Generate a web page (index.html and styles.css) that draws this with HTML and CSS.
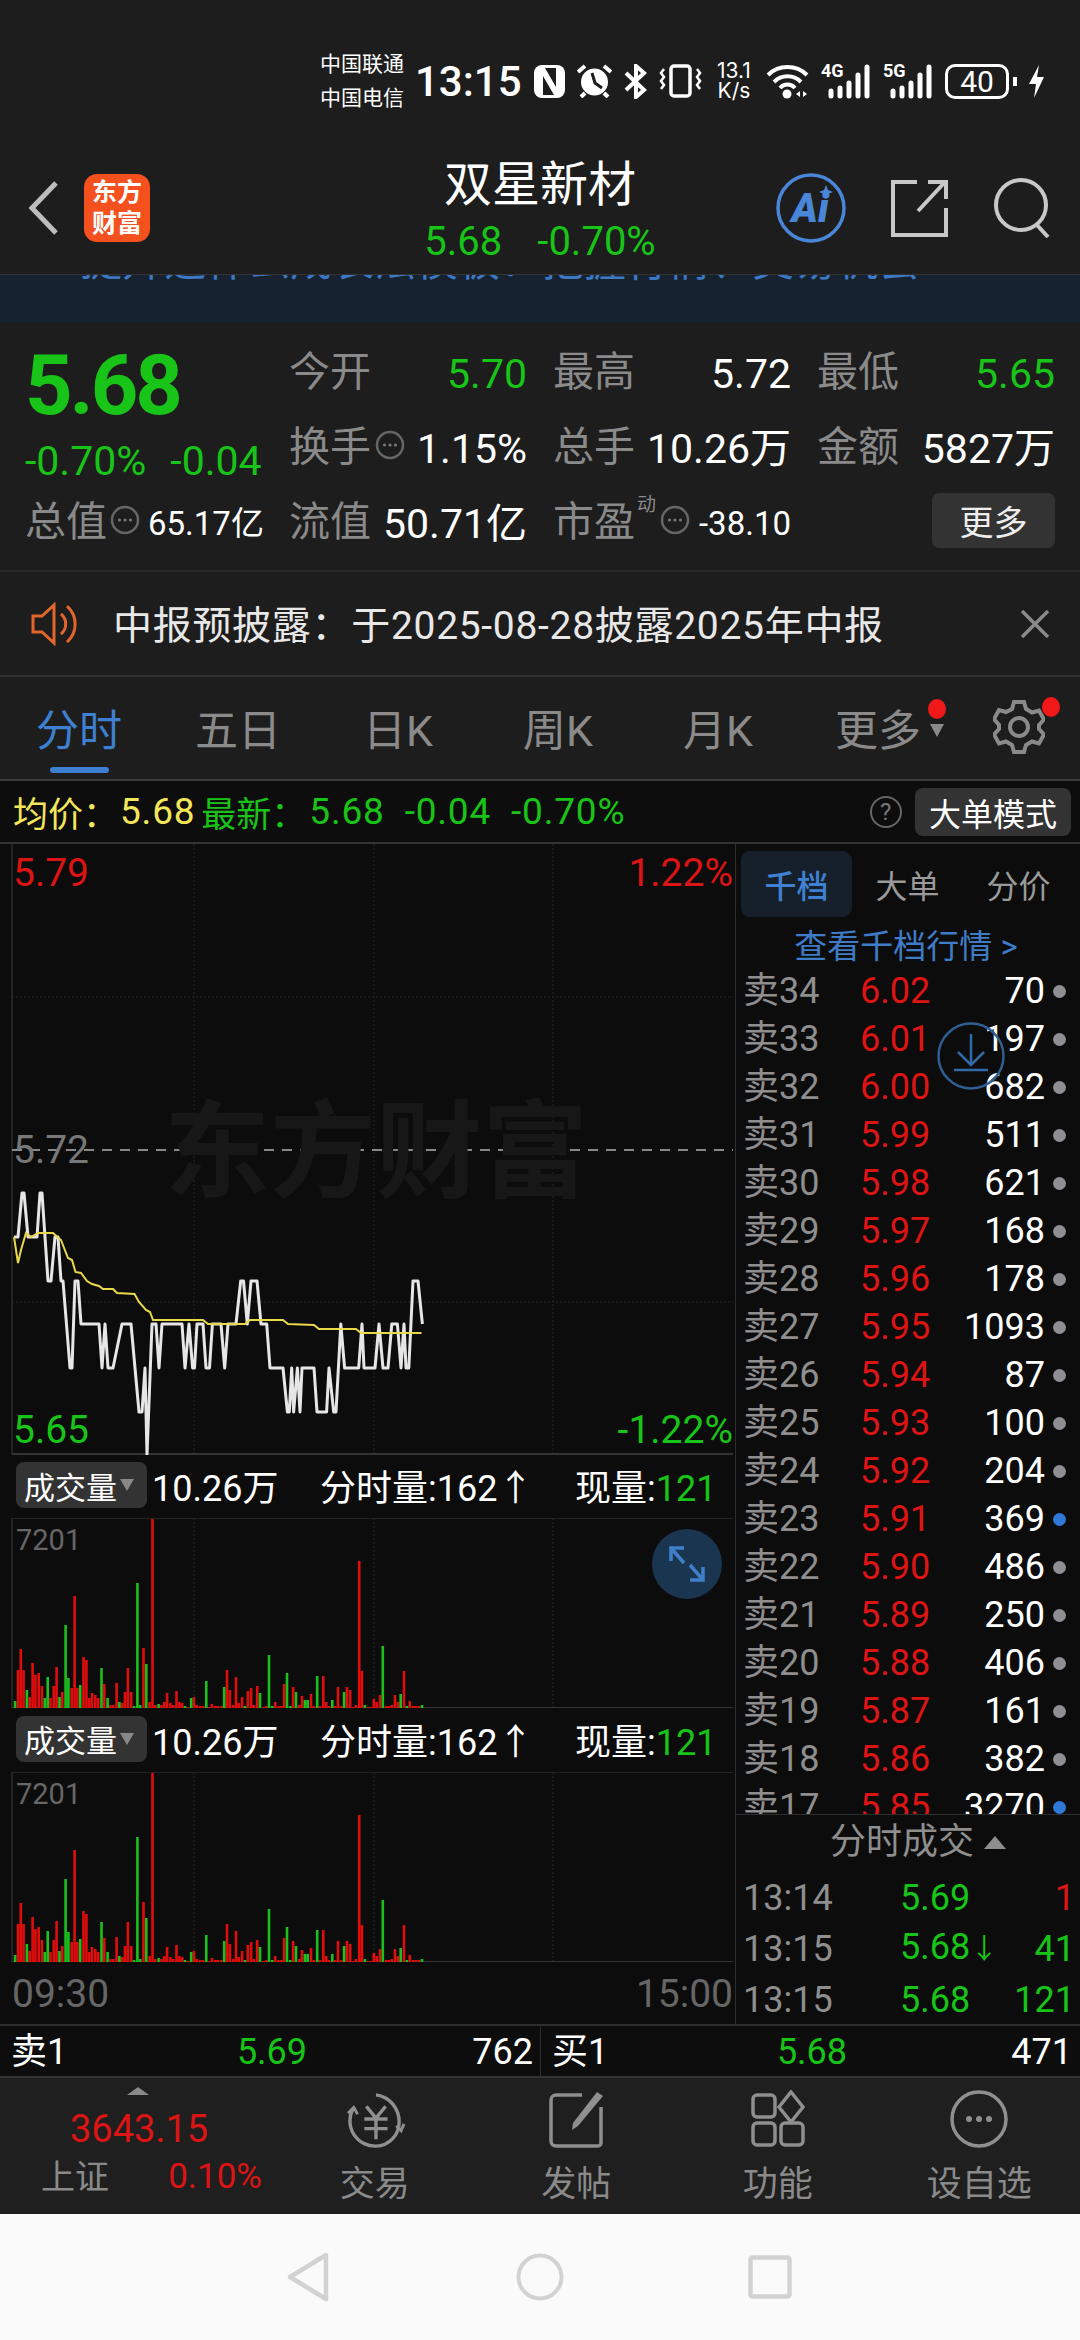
FILE: index.html
```html
<!DOCTYPE html>
<html lang="zh-CN">
<head>
  <meta charset="UTF-8" />
  <meta name="viewport" content="width=device-width, initial-scale=1.0"/>
  <title>双星新材</title>
  <link rel="stylesheet" href="styles.css">
</head>
<body>

  <svg class="sprite">
    <symbol id="dots" viewBox="0 0 30 30">
      <circle cx="15" cy="15" r="13" fill="none" stroke="#666" stroke-width="2.5"/>
      <circle cx="9.5" cy="15" r="1.6" fill="#777"/><circle cx="15" cy="15" r="1.6" fill="#777"/><circle cx="20.5" cy="15" r="1.6" fill="#777"/>
    </symbol>
    <symbol id="bars" viewBox="0 0 52 36">
      <path d="M10 33v-5M19 33V25M28 33V20M37 33V12M46 33V4" stroke="#fff" stroke-width="5" stroke-linecap="round"/>
    </symbol>
    <symbol id="volbars" viewBox="0 0 735 190">
      <g transform="translate(0 -1518)">
        <path d="M194 1518V1708M374 1518V1708M553 1518V1708" stroke="#2a2a2a" stroke-width="1" stroke-dasharray="2 2" fill="none"/>
        <path d="M12 1518V1708M12 1518H733" stroke="#2b2b2b" stroke-width="1.5" fill="none"/>
        <path d="M12 1708H733" stroke="#333" stroke-width="2" fill="none"/>
        <path fill="none" stroke="#e00d0d" stroke-width="2.6" d="M18 1708V1670M20.8 1708V1649M23.6 1708V1670M29.7 1708V1697M32.6 1708V1663M35.4 1708V1675M38.7 1708V1673M42 1708V1686M50.5 1708V1698M53.8 1708V1686M56.6 1708V1667M62.3 1708V1692M71.7 1708V1688M74.6 1708V1596M77.4 1708V1688M83.5 1708V1657M86.4 1708V1660M89.2 1708V1698M92 1708V1693M95.3 1708V1695M98.2 1708V1698M104.3 1708V1684M110.4 1708V1705M113.3 1708V1705M116.6 1708V1683M122.2 1708V1703M125 1708V1692M127.9 1708V1668M131.2 1708V1692M143.5 1708V1648M149.6 1708V1702M152.5 1708V1519M155.3 1708V1705M161.4 1708V1705M164.3 1708V1702M167.1 1708V1693M170.4 1708V1703M173.2 1708V1705M176.5 1708V1691M179.4 1708V1702M182.2 1708V1703M187.9 1708V1707M194 1708V1697M196.8 1708V1705M200.1 1708V1706M203 1708V1706M209.1 1708V1707M212 1708V1704M215.2 1708V1706M218 1708V1706M221.4 1708V1706M227 1708V1670M229.9 1708V1690M233.2 1708V1705M236 1708V1677M238.8 1708V1703M242.1 1708V1697M247.8 1708V1691M251.1 1708V1688M253.9 1708V1705M257.2 1708V1686M263.4 1708V1707M266.2 1708V1706M275.2 1708V1702M278.5 1708V1706M281.3 1708V1706M284.1 1708V1684M293.1 1708V1687M299.2 1708V1705M302 1708V1696M311 1708V1694M313.9 1708V1706M320 1708V1706M323.3 1708V1676M326.2 1708V1702M329 1708V1706M335.1 1708V1706M338 1708V1687M341.3 1708V1706M346.9 1708V1687M350.2 1708V1690M353 1708V1707M355.9 1708V1705M359.2 1708V1561M362 1708V1671M368.2 1708V1707M371 1708V1707M373.8 1708V1699M376.7 1708V1702M380 1708V1695M386 1708V1706M388.9 1708V1706M391.8 1708V1705M395 1708V1695M398 1708V1702M404 1708V1671M409.7 1708V1701M413 1708V1706M415.8 1708V1706M419 1708V1706"/>
        <path fill="none" stroke="#1cc01c" stroke-width="2.6" d="M15.1 1708V1701M26.9 1708V1690M44.8 1708V1698M47.7 1708V1677M59.5 1708V1697M65.6 1708V1625M68.4 1708V1678M80.2 1708V1685M101.5 1708V1668M107.6 1708V1698M119.4 1708V1702M134 1708V1706M137.4 1708V1583M140.2 1708V1705M146.3 1708V1664M158.6 1708V1704M185 1708V1706M191.2 1708V1698M206.3 1708V1681M224.2 1708V1687M245 1708V1706M260 1708V1693M269 1708V1655M272.3 1708V1706M287 1708V1673M290.3 1708V1706M296 1708V1692M304.9 1708V1700M307.7 1708V1700M317.2 1708V1676M332.3 1708V1700M344.1 1708V1692M364.9 1708V1705M382.8 1708V1646M400.7 1708V1694M406.9 1708V1706M422 1708V1705"/>
      </g>
    </symbol>
  </svg>

  <div class="status">
    <div class="carrier"><span>中国联通</span><span>中国电信</span></div>
    <div class="clock">13:15</div>
    <svg width="31" height="33" viewBox="0 0 31 33"><rect width="31" height="33" rx="8" fill="#fff"/><path d="M9 11l11 19H9zM22 22L11 3h11z" fill="#1d1d1d"/></svg>
    <svg width="35" height="34" viewBox="0 0 35 34"><circle cx="17.500" cy="18" r="13.500" fill="#fff"/><path d="M15 9l3 10 7 5" stroke="#1d1d1d" stroke-width="3" fill="none"/><path d="M1 8l7-6M34 8l-7-6M8 29l-4 4M27 29l4 4" stroke="#fff" stroke-width="4"/></svg>
    <svg width="23" height="35" viewBox="0 0 23 35"><path d="M2 9l18 17-8 7V2l8 7L2 26" stroke="#fff" stroke-width="4" fill="none"/></svg>
    <svg width="43" height="34" viewBox="0 0 43 34"><rect x="12" y="2" width="19" height="30" rx="3" fill="none" stroke="#fff" stroke-width="3.500"/><path d="M5 5l-3 4 3 4-3 4 3 4-3 4M38 5l3 4-3 4 3 4-3 4 3 4" stroke="#fff" stroke-width="2.500" fill="none"/></svg>
    <div class="speed"><span>13.1</span><span>K/s</span></div>
    <svg width="43" height="36" viewBox="0 0 43 36"><path d="M2 12a28 28 0 0 1 39 0M8 19a19 19 0 0 1 27 0M14 25a10 10 0 0 1 15 0" stroke="#fff" stroke-width="4" fill="none"/><circle cx="21" cy="31" r="4.500" fill="#fff"/><path d="M34 28v6l-4-3zM37 28v6l4-3z" fill="#fff"/></svg>
    <div class="signal"><span>4G</span><svg width="52" height="36"><use href="#bars"/></svg></div>
    <div class="signal"><span>5G</span><svg width="52" height="36"><use href="#bars"/></svg></div>
    <div class="battery"><span>40</span></div>
    <svg class="bolt" width="15" height="33" viewBox="0 0 15 33"><path d="M10 0L0 19h7L5 33l10-21H8z" fill="#fff"/></svg>
  </div>

  <header class="appbar">
    <div class="appbar-left">
      <svg width="30" height="54" viewBox="0 0 30 54"><path d="M28 2L4 27l24 25" stroke="#bdbdbd" stroke-width="5" fill="none"/></svg>
      <div class="logo"><span>东方</span><span>财富</span></div>
    </div>
    <div class="appbar-title">
      <div class="stock-name">双星新材</div>
      <div class="stock-sub"><span>5.68</span><span>-0.70%</span></div>
    </div>
    <div class="appbar-right">
      <svg width="72" height="72" viewBox="0 0 72 72"><circle cx="36" cy="36" r="33" fill="none" stroke="#4a86d8" stroke-width="3.500"/><text x="35" y="50" class="ai">Ai</text><path d="M51 13l2 5 5 2-5 2-2 5-2-5-5-2 5-2z" fill="#4a86d8"/></svg>
      <svg width="58" height="58" viewBox="0 0 58 58"><path d="M26 3H2v53h53V29" stroke="#c8c8c8" stroke-width="4" fill="none"/><path d="M27 32L54 3M37 3h18v17" stroke="#c8c8c8" stroke-width="4" fill="none"/></svg>
      <svg width="58" height="60" viewBox="0 0 58 60"><circle cx="28" cy="27" r="25" fill="none" stroke="#c8c8c8" stroke-width="4"/><path d="M44 47l11 12" stroke="#c8c8c8" stroke-width="4"/></svg>
    </div>
  </header>

  <div class="banner">
    <div class="banner-text"><span>提升选什么成长法模板：把握行情、交易机会</span><span class="banner-more">&gt;&gt;</span></div>
  </div>

  <section class="quote">
    <div class="quote-main">
      <div class="price-big">5.68</div>
      <div class="price-change"><span>-0.70%</span><span>-0.04</span></div>
      <div class="cell cell-left">
        <span class="lab">总值</span><svg class="dots"><use href="#dots"/></svg><span class="val small">65.17亿</span>
      </div>
    </div>
    <div class="quote-grid">
      <div class="cell"><span class="lab">今开</span><span class="val green">5.70</span></div>
      <div class="cell"><span class="lab">最高</span><span class="val">5.72</span></div>
      <div class="cell"><span class="lab">最低</span><span class="val green">5.65</span></div>
      <div class="cell"><span class="lab">换手</span><svg class="dots"><use href="#dots"/></svg><span class="val">1.15%</span></div>
      <div class="cell"><span class="lab">总手</span><span class="val">10.26万</span></div>
      <div class="cell"><span class="lab">金额</span><span class="val">5827万</span></div>
      <div class="cell"><span class="lab">流值</span><span class="val">50.71亿</span></div>
      <div class="cell"><span class="lab">市盈<sup>动</sup></span><svg class="dots dots-sup"><use href="#dots"/></svg><span class="val small">-38.10</span></div>
      <div class="cell cell-end"><span class="more-btn">更多</span></div>
    </div>
  </section>

  <section class="notice">
    <svg width="50" height="44" viewBox="0 0 50 44"><path d="M3 14h9L24 3v38L12 30H3z" fill="none" stroke="#e2662a" stroke-width="3"/><path d="M31 12a13 13 0 0 1 0 20M37 4a24 24 0 0 1 0 36" fill="none" stroke="#e2662a" stroke-width="3"/></svg>
    <div class="notice-text">中报预披露：于2025-08-28披露2025年中报</div>
    <svg class="notice-close" width="30" height="30" viewBox="0 0 30 30"><path d="M2 2l26 26M28 2L2 28" stroke="#8a8a8a" stroke-width="3.500"/></svg>
  </section>

  <nav class="tabs">
    <div class="tab active">分时</div>
    <div class="tab">五日</div>
    <div class="tab">日K</div>
    <div class="tab">周K</div>
    <div class="tab">月K</div>
    <div class="tab tab-more">更多<i class="caret"></i><i class="red-dot"></i></div>
    <div class="tab tab-gear">
      <svg width="52" height="56" viewBox="0 0 52 56"><path d="M21 3h10l2 7 6 3.500 7-2 5 9-5 5.500v4l5 5.500-5 9-7-2-6 3.500-2 7H21l-2-7-6-3.500-7 2-5-9 5-5.500v-4L1 20l5-9 7 2 6-3z" fill="none" stroke="#8a8a8a" stroke-width="4"/><circle cx="26" cy="28" r="9" fill="none" stroke="#8a8a8a" stroke-width="4"/></svg>
      <i class="red-dot"></i>
    </div>
  </nav>

  <div class="infoline">
    <span class="yellow lab-info">均价：</span><span class="yellow">5.68</span>
    <span class="green lab-new">最新：</span><span class="green v1">5.68</span><span class="green v2">-0.04</span><span class="green v2">-0.70%</span>
    <span class="help">?</span>
    <span class="mode-btn">大单模式</span>
  </div>

  <div class="board">
    <div class="charts">
      <div class="price-chart">
        <svg width="735" height="611" viewBox="0 844 735 611">
          <path d="M194 844V1455M374 844V1455M553 844V1455" stroke="#262626" stroke-width="1" stroke-dasharray="2 2" fill="none"/>
          <path d="M12 997H733M12 1302H733" stroke="#262626" stroke-width="1" stroke-dasharray="2 2" fill="none"/>
          <path d="M12 844V1455" stroke="#2b2b2b" stroke-width="1.500" fill="none"/>
          <path d="M12 1454H733" stroke="#333" stroke-width="2" fill="none"/>
          <path d="M12 1150H733" stroke="#8a8a8a" stroke-width="2" stroke-dasharray="10 8" fill="none"/>
          <polyline fill="none" stroke="#e6e6e6" stroke-width="3" stroke-linejoin="round" points="14,1237 18,1237 22,1193 24,1193 28,1237 37,1237 40,1193 42,1193 48,1281 51,1281 55,1237 58,1237 61,1281 63,1281 70,1368 72,1368 75,1281 78,1281 81,1324 99,1324 102,1368 105,1324 108,1368 113,1368 122,1324 131,1324 139,1412 142,1412 145,1368 147,1455 152,1324 156,1324 159,1368 162,1324 182,1324 185,1368 189,1324 192.600,1368 194.500,1368 197,1324 203,1324 206,1368 209.500,1368 212.400,1324 221,1324 224.700,1368 228,1324 236,1324 240.700,1281 243.500,1281 247.300,1324 251,1281 257,1281 261,1324 266.700,1324 270,1368 283,1368 287.400,1412 289.300,1412 291.700,1368 293.600,1412 297.400,1368 300,1412 302,1368 307.700,1368 310.600,1368 314,1368 317,1412 326.600,1412 329,1368 333.700,1412 336,1412 340.800,1324 344.600,1368 358.700,1368 362,1324 364,1368 375,1368 379,1324 383,1368 388,1368 391.800,1324 397.400,1324 401,1368 404,1324 406,1368 408.800,1368 413,1281 418,1281 422.400,1324"/>
          <polyline fill="none" stroke="#e8d84a" stroke-width="2" points="14,1237 18,1263 21,1250 26,1233 31,1237 38,1233 53,1233 61,1240 68,1258 72,1260 75.500,1272 81,1273 87,1281 92,1284 99,1286 103,1289 113,1289 117,1293 134.500,1294 139,1302 146,1310 150,1312 153,1320 203,1320 208,1324 245,1324 250,1320 283,1320 288,1324 314,1325 319,1329 356,1329 361,1333 421.500,1333"/>
        </svg>
        <div class="watermark">东方财富</div>
        <span class="axis-lab top-left red">5.79</span>
        <span class="axis-lab top-right red">1.22%</span>
        <span class="axis-lab mid-left">5.72</span>
        <span class="axis-lab bot-left green">5.65</span>
        <span class="axis-lab bot-right green">-1.22%</span>
      </div>

      <div class="vol-head">
        <span class="vol-btn">成交量<i class="caret-sm"></i></span>
        <span>10.26万</span>
        <span>分时量:162↑</span>
        <span>现量:<b class="green">121</b></span>
      </div>
      <div class="vol-chart">
        <svg width="735" height="190"><use href="#volbars"/></svg>
        <span class="vol-max">7201</span>
        <div class="expand">
          <svg width="38" height="38" viewBox="0 0 38 38"><path d="M3 16V3h13M3 3l13 15M35 22v13H22M35 35L22 20" stroke="#3f7fc9" stroke-width="3.500" fill="none"/></svg>
        </div>
      </div>

      <div class="vol-head vol-head-2">
        <span class="vol-btn">成交量<i class="caret-sm"></i></span>
        <span>10.26万</span>
        <span>分时量:162↑</span>
        <span>现量:<b class="green">121</b></span>
      </div>
      <div class="vol-chart vol-chart-2">
        <svg width="735" height="190"><use href="#volbars"/></svg>
        <span class="vol-max">7201</span>
      </div>

      <div class="time-axis"><span>09:30</span><span>15:00</span></div>
    </div>

    <aside class="depth">
      <div class="depth-tabs">
        <div class="depth-tab active">千档</div>
        <div class="depth-tab">大单</div>
        <div class="depth-tab">分价</div>
      </div>
      <div class="depth-link">查看千档行情 &gt;</div>
      <div class="depth-rows">
        <div class="row"><span class="r-lab">卖34</span><span class="red">6.02</span><span class="r-qty">70</span><i class="r-dot"></i></div>
        <div class="row"><span class="r-lab">卖33</span><span class="red">6.01</span><span class="r-qty">197</span><i class="r-dot"></i></div>
        <div class="row"><span class="r-lab">卖32</span><span class="red">6.00</span><span class="r-qty">682</span><i class="r-dot"></i></div>
        <div class="row"><span class="r-lab">卖31</span><span class="red">5.99</span><span class="r-qty">511</span><i class="r-dot"></i></div>
        <div class="row"><span class="r-lab">卖30</span><span class="red">5.98</span><span class="r-qty">621</span><i class="r-dot"></i></div>
        <div class="row"><span class="r-lab">卖29</span><span class="red">5.97</span><span class="r-qty">168</span><i class="r-dot"></i></div>
        <div class="row"><span class="r-lab">卖28</span><span class="red">5.96</span><span class="r-qty">178</span><i class="r-dot"></i></div>
        <div class="row"><span class="r-lab">卖27</span><span class="red">5.95</span><span class="r-qty">1093</span><i class="r-dot"></i></div>
        <div class="row"><span class="r-lab">卖26</span><span class="red">5.94</span><span class="r-qty">87</span><i class="r-dot"></i></div>
        <div class="row"><span class="r-lab">卖25</span><span class="red">5.93</span><span class="r-qty">100</span><i class="r-dot"></i></div>
        <div class="row"><span class="r-lab">卖24</span><span class="red">5.92</span><span class="r-qty">204</span><i class="r-dot"></i></div>
        <div class="row"><span class="r-lab">卖23</span><span class="red">5.91</span><span class="r-qty">369</span><i class="r-dot blue"></i></div>
        <div class="row"><span class="r-lab">卖22</span><span class="red">5.90</span><span class="r-qty">486</span><i class="r-dot"></i></div>
        <div class="row"><span class="r-lab">卖21</span><span class="red">5.89</span><span class="r-qty">250</span><i class="r-dot"></i></div>
        <div class="row"><span class="r-lab">卖20</span><span class="red">5.88</span><span class="r-qty">406</span><i class="r-dot"></i></div>
        <div class="row"><span class="r-lab">卖19</span><span class="red">5.87</span><span class="r-qty">161</span><i class="r-dot"></i></div>
        <div class="row"><span class="r-lab">卖18</span><span class="red">5.86</span><span class="r-qty">382</span><i class="r-dot"></i></div>
        <div class="row"><span class="r-lab">卖17</span><span class="red">5.85</span><span class="r-qty">3270</span><i class="r-dot blue"></i></div>
      </div>
      <div class="download">
        <svg width="68" height="68" viewBox="0 0 68 68"><circle cx="34" cy="34" r="32.500" fill="none" stroke="#2f5f90" stroke-width="2.500"/><path d="M34 12v30M21 30l13 13 13-13M17 48h34" fill="none" stroke="#2f6aa6" stroke-width="2.500"/></svg>
      </div>
      <div class="trades-head">分时成交<i class="caret-up"></i></div>
      <div class="trade"><span class="r-lab">13:14</span><span class="green">5.69</span><span class="t-qty red">1</span></div>
      <div class="trade"><span class="r-lab">13:15</span><span class="green">5.68<small>↓</small></span><span class="t-qty green">41</span></div>
      <div class="trade"><span class="r-lab">13:15</span><span class="green">5.68</span><span class="t-qty green">121</span></div>
    </aside>
  </div>

  <div class="level-one">
    <div class="level-cell"><span>卖1</span><span class="green">5.69</span><span class="level-qty">762</span></div>
    <div class="level-cell"><span>买1</span><span class="green">5.68</span><span class="level-qty">471</span></div>
  </div>

  <footer class="bottom-nav">
    <div class="market">
      <i class="market-tri"></i>
      <div class="market-price">3643.15</div>
      <div class="market-row"><span class="market-name">上证</span><span class="red">0.10%</span></div>
    </div>
    <div class="nav-item">
      <svg width="62" height="60" viewBox="0 0 62 60"><path d="M8 20a26 26 0 0 0 24 38c14 0 24-12 24-25 0-13-9-26-24-28" fill="none" stroke="#8f8f8f" stroke-width="3.500"/><path d="M3 24l6-6 4 7M53 37l5 5 3-7" fill="none" stroke="#8f8f8f" stroke-width="3"/><path d="M22 17l10 12 10-12M20 30h24M20 40h24M32 29v22" fill="none" stroke="#8f8f8f" stroke-width="3.500"/></svg>
      <span>交易</span>
    </div>
    <div class="nav-item">
      <svg width="56" height="56" viewBox="0 0 56 56"><path d="M34 4H8a5 5 0 0 0-5 5v41a5 5 0 0 0 5 5h42a3 3 0 0 0 3-3V16" fill="none" stroke="#8f8f8f" stroke-width="3.500"/><path d="M49 1l6 4-25 30-6 4 1-7z" fill="#8f8f8f"/></svg>
      <span>发帖</span>
    </div>
    <div class="nav-item">
      <svg width="54" height="56" viewBox="0 0 54 56"><rect x="2" y="4" width="22" height="22" rx="4" fill="none" stroke="#8f8f8f" stroke-width="3.500"/><path d="M40 1l12 15-12 15-12-15z" fill="none" stroke="#8f8f8f" stroke-width="3.500"/><rect x="2" y="32" width="22" height="22" rx="4" fill="none" stroke="#8f8f8f" stroke-width="3.500"/><rect x="30" y="32" width="22" height="22" rx="4" fill="none" stroke="#8f8f8f" stroke-width="3.500"/></svg>
      <span>功能</span>
    </div>
    <div class="nav-item">
      <svg width="58" height="58" viewBox="0 0 58 58"><circle cx="29" cy="29" r="27" fill="none" stroke="#8f8f8f" stroke-width="3.500"/><circle cx="19" cy="29" r="3" fill="#8f8f8f"/><circle cx="29" cy="29" r="3" fill="#8f8f8f"/><circle cx="39" cy="29" r="3" fill="#8f8f8f"/></svg>
      <span>设自选</span>
    </div>
  </footer>

  <div class="system-nav">
    <svg width="44" height="50" viewBox="0 0 44 50"><path d="M40 3v44L4 25z" fill="none" stroke="#d2d2d2" stroke-width="4.500" stroke-linejoin="round"/></svg>
    <svg width="48" height="48" viewBox="0 0 48 48"><circle cx="24" cy="24" r="21.500" fill="none" stroke="#d2d2d2" stroke-width="4"/></svg>
    <svg width="44" height="44" viewBox="0 0 44 44"><rect x="2.500" y="2.500" width="39" height="39" rx="2" fill="none" stroke="#d2d2d2" stroke-width="4.500"/></svg>
  </div>

</body>
</html>
```

FILE: styles.css
```css
* {
  box-sizing: border-box;
}

body {
  margin: 0;
  width: 1080px;
  height: 2340px;
  overflow: hidden;
  background-color: #1d1d1d;
  color: #fff;
  font-family: Roboto, "Noto Sans CJK SC", sans-serif;
}

i {
  font-style: normal;
}

.sprite {
  display: none;
}

.green {
  color: #18c418;
}

.red {
  color: #dc1414;
}

.yellow {
  color: #f4e65a;
}

/* status bar */
.status {
  height: 160px;
  display: flex;
  align-items: center;
  gap: 12px;
  padding: 2px 0 0 320px;
}

.carrier {
  display: flex;
  flex-direction: column;
  font-size: 21px;
  line-height: 34px;
  width: 86px;
  margin-right: -3px;
}

.clock {
  font-size: 42px;
  font-weight: 500;
  width: 105px;
  margin-right: 2px;
}

.speed {
  width: 40px;
  display: flex;
  flex-direction: column;
  align-items: center;
  font-size: 21px;
  line-height: 20px;
  font-family: Inter, sans-serif;
}

.signal {
  position: relative;
  width: 50px;
  height: 36px;
}

.signal span {
  position: absolute;
  left: 0;
  top: -2px;
  font-size: 18px;
  line-height: 20px;
  font-weight: 700;
}

.signal svg {
  display: block;
}

.battery {
  width: 64px;
  height: 35px;
  border: 3px solid #fff;
  border-radius: 10px;
  display: flex;
  align-items: center;
  justify-content: center;
  font-size: 30px;
  position: relative;
  margin-right: 4px;
}

.battery::after {
  content: "";
  position: absolute;
  right: -11px;
  top: 10px;
  width: 4px;
  height: 9px;
  background: #fff;
}

.bolt {
  margin-left: 4px;
}

/* app bar */
.appbar {
  height: 115px;
  display: grid;
  grid-template-columns: 1fr auto 1fr;
  border-bottom: 1px solid #333;
  position: relative;
  z-index: 1;
  background: #1d1d1d;
}

.appbar-left {
  display: flex;
  align-items: center;
  gap: 26px;
  padding: 0 0 18px 28px;
}

.logo {
  width: 66px;
  height: 68px;
  background: #f4511e;
  border-radius: 13px;
  display: flex;
  flex-direction: column;
  align-items: center;
  justify-content: center;
  font-size: 25px;
  line-height: 31px;
  font-weight: 700;
}

.appbar-title {
  text-align: center;
}

.stock-name {
  font-size: 48px;
  line-height: 50px;
}

.stock-sub {
  display: flex;
  justify-content: center;
  gap: 35px;
  margin-top: 10px;
  font-size: 40px;
  line-height: 44px;
  color: #18c418;
}

.appbar-right {
  display: flex;
  align-items: center;
  justify-content: flex-end;
  gap: 44px;
  padding: 0 29px 18px 0;
}

.ai {
  font-size: 40px;
  font-weight: 900;
  font-style: italic;
  fill: #4a86d8;
  text-anchor: middle;
}

/* clipped promo strip under the app bar */
.banner {
  height: 48px;
  background: #16222f;
  overflow: hidden;
}

.banner-text {
  margin-top: -35px;
  padding: 0 45px 0 80px;
  display: flex;
  justify-content: space-between;
  font-size: 42px;
  line-height: 44px;
  color: #3d78c2;
}

.banner-more {
  font-size: 36px;
}

/* quote block */
.quote {
  height: 249px;
  display: flex;
  padding-top: 13px;
  border-bottom: 2px solid #2a2a2a;
}

.quote-main {
  width: 289px;
  padding-left: 25px;
  display: grid;
  grid-template-rows: 100px 50px 75px;
}

.price-big {
  font-size: 83px;
  line-height: 100px;
  font-weight: 700;
  letter-spacing: -3px;
  color: #18c418;
}

.price-change {
  display: flex;
  gap: 24px;
  font-size: 41px;
  line-height: 50px;
  color: #18c418;
  white-space: nowrap;
}

.quote-grid {
  display: grid;
  grid-template-columns: repeat(3, 238px);
  grid-auto-rows: 75px;
  column-gap: 26px;
}

.cell {
  display: flex;
  align-items: center;
  justify-content: space-between;
}

.cell-left {
  width: 238px;
  justify-content: flex-start;
}

.cell-end {
  justify-content: flex-end;
}

.lab {
  font-size: 41px;
  line-height: 50px;
  color: #8a8a8a;
  position: relative;
  top: -2px;
  white-space: nowrap;
}

.lab sup {
  position: absolute;
  left: 84px;
  top: -4px;
  font-size: 19px;
  line-height: 24px;
}

.val {
  font-size: 41px;
  line-height: 50px;
  white-space: nowrap;
}

.val.green {
  color: #18c418;
}

.val.small {
  font-size: 33px;
}

.dots {
  width: 30px;
  height: 30px;
  flex: none;
  margin: -8px 8px 0 0;
}

.dots-sup {
  margin: -8px 4px 0 20px;
}

.cell-left .dots {
  margin: -8px 8px 0 3px;
}

.more-btn {
  width: 123px;
  height: 55px;
  background: #333;
  border-radius: 7px;
  display: flex;
  align-items: center;
  justify-content: center;
  font-size: 34px;
  color: #eee;
  margin-top: -7px;
}

/* notice */
.notice {
  height: 105px;
  display: flex;
  align-items: center;
  padding: 0 30px;
  border-bottom: 2px solid #333;
}

.notice-text {
  margin-left: 33px;
  font-size: 39px;
  letter-spacing: 0.7px;
  color: #e8e8e8;
  white-space: nowrap;
  position: relative;
  top: -2px;
}

.notice-close {
  margin-left: auto;
}

/* chart tabs */
.tabs {
  height: 104px;
  display: grid;
  grid-template-columns: 158px repeat(5, 160px) 122px;
  border-bottom: 2px solid #3a3a3a;
}

.tab {
  position: relative;
  display: flex;
  align-items: center;
  justify-content: center;
  font-size: 43px;
  color: #8a8a8a;
  padding-bottom: 2px;
}

.tab.active {
  color: #3d7fd0;
}

.tab.active::after {
  content: "";
  position: absolute;
  left: 50px;
  bottom: 6px;
  width: 59px;
  height: 6px;
  border-radius: 3px;
  background: #3d7fd0;
}

.caret {
  position: absolute;
  left: 132px;
  top: 47px;
  width: 0;
  height: 0;
  border-left: 7px solid transparent;
  border-right: 7px solid transparent;
  border-top: 13px solid #8a8a8a;
}

.red-dot {
  position: absolute;
  left: 130px;
  top: 22px;
  width: 18px;
  height: 20px;
  border-radius: 50%;
  background: #f01818;
}

.tab-gear .red-dot {
  left: 84px;
  top: 20px;
}

/* info line above the chart */
.infoline {
  height: 63px;
  display: flex;
  align-items: center;
  padding-left: 13px;
  background: #0d0d0d;
  border-bottom: 2px solid #333;
  font-size: 37px;
  letter-spacing: 0.8px;
  white-space: nowrap;
}

.lab-info,
.lab-new {
  width: 108px;
  font-size: 35px;
  letter-spacing: 0;
}

.lab-info {
  width: 107px;
}

.lab-new {
  margin-left: 6px;
}

.v2 {
  margin-left: 20px;
}

.help {
  margin-left: auto;
  width: 32px;
  height: 32px;
  border: 2px solid #666;
  border-radius: 50%;
  display: flex;
  align-items: center;
  justify-content: center;
  font-size: 24px;
  color: #777;
}

.mode-btn {
  width: 156px;
  height: 48px;
  margin: 0 9px 0 13px;
  background: #333;
  border-radius: 8px;
  display: flex;
  align-items: center;
  justify-content: center;
  font-size: 32px;
  letter-spacing: 0;
}

/* left charts */
.board {
  height: 1180px;
  display: grid;
  grid-template-columns: 735px 345px;
  background: #0c0c0c;
}

.charts svg {
  display: block;
}

.price-chart {
  position: relative;
  height: 611px;
}

.watermark {
  position: absolute;
  left: 164px;
  top: 249px;
  font-size: 106px;
  line-height: 120px;
  font-weight: 700;
  color: #171717;
  white-space: nowrap;
}

.axis-lab {
  position: absolute;
  font-size: 39px;
  line-height: 44px;
  color: #777;
}

.axis-lab.red {
  color: #dc1414;
}

.axis-lab.green {
  color: #18c418;
}

.top-left {
  left: 13px;
  top: 7px;
}

.top-right {
  right: 2px;
  top: 7px;
}

.mid-left {
  left: 13px;
  top: 284px;
}

.bot-left {
  left: 13px;
  top: 564px;
}

.bot-right {
  right: 2px;
  top: 564px;
}

.vol-head {
  height: 63px;
  display: grid;
  grid-template-columns: 136px 168px 255px 1fr;
  align-items: center;
  padding: 0 0 3px 16px;
  font-size: 36px;
  white-space: nowrap;
}

.vol-head-2 {
  height: 64px;
}

.vol-head b {
  font-weight: 400;
}

.vol-btn {
  width: 131px;
  height: 46px;
  background: #333;
  border-radius: 8px;
  display: flex;
  align-items: center;
  padding-left: 8px;
  font-size: 31px;
  gap: 3px;
}

.caret-sm {
  width: 0;
  height: 0;
  border-left: 7px solid transparent;
  border-right: 7px solid transparent;
  border-top: 12px solid #888;
}

.vol-chart {
  position: relative;
  height: 190px;
}

.vol-chart-2 {
  height: 191px;
}

.vol-max {
  position: absolute;
  left: 16px;
  top: 4px;
  font-size: 29px;
  line-height: 36px;
  color: #666;
}

.expand {
  position: absolute;
  left: 652px;
  top: 11px;
  width: 70px;
  height: 70px;
  border-radius: 50%;
  background: #1a3550;
  display: flex;
  align-items: center;
  justify-content: center;
}

.time-axis {
  height: 61px;
  display: flex;
  justify-content: space-between;
  align-items: center;
  padding: 0 2px 0 12px;
  font-size: 39px;
  color: #666;
}

/* right depth panel */
.depth {
  position: relative;
  display: flex;
  flex-direction: column;
  border-left: 1px solid #2e2e2e;
}

.depth-tabs {
  display: grid;
  grid-template-columns: repeat(3, 111px);
  padding: 7px 0 0 5px;
}

.depth-tab {
  height: 66px;
  border-radius: 9px;
  display: flex;
  align-items: center;
  justify-content: center;
  font-size: 32px;
  color: #9a9a9a;
}

.depth-tab.active {
  background: #16202b;
  color: #3f80d2;
  font-weight: 500;
}

.depth-link {
  height: 49px;
  padding-top: 10px;
  text-align: center;
  font-size: 33px;
  line-height: 39px;
  color: #3e7cc8;
  margin-right: 4px;
}

.depth-rows {
  height: 848px;
  padding-top: 1px;
  overflow: hidden;
}

.row {
  height: 48px;
  display: grid;
  grid-template-columns: 117px 90px 95px 13px;
  align-items: baseline;
  padding-left: 7px;
  font-size: 36px;
  line-height: 48px;
}

.r-lab {
  color: #8e8e8e;
}

.r-qty {
  text-align: right;
}

.r-dot {
  align-self: center;
  width: 13px;
  height: 13px;
  margin-left: 8px;
  border-radius: 50%;
  background: #8f8f93;
}

.r-dot.blue {
  background: #2f78d6;
}

.download {
  position: absolute;
  left: 201px;
  top: 178px;
}

.trades-head {
  height: 58px;
  flex: none;
  border-top: 1px solid #2e2e2e;
  display: flex;
  align-items: center;
  justify-content: center;
  gap: 10px;
  font-size: 36px;
  line-height: 44px;
  color: #8e8e8e;
  padding: 0 0 3px 20px;
}

.caret-up {
  width: 0;
  height: 0;
  border-left: 11px solid transparent;
  border-right: 11px solid transparent;
  border-bottom: 13px solid #8e8e8e;
}

.trade {
  height: 51px;
  display: grid;
  grid-template-columns: 157px 1fr auto;
  align-items: center;
  padding: 0 5px 0 7px;
  font-size: 36px;
  line-height: 44px;
}

.trade small {
  font-size: 28px;
}

/* level one strip */
.level-one {
  height: 54px;
  display: grid;
  grid-template-columns: 540px 540px;
  background: #0d0d0d;
  border-top: 2px solid #2e2e2e;
  border-bottom: 2px solid #333;
}

.level-cell {
  display: grid;
  grid-template-columns: 1fr auto 1fr;
  align-items: baseline;
  padding: 2px 7px 0 11px;
  font-size: 36px;
  line-height: 48px;
}

.level-cell + .level-cell {
  border-left: 1px solid #2e2e2e;
  padding-right: 8px;
}

.level-qty {
  text-align: right;
}

/* bottom nav */
.bottom-nav {
  height: 136px;
  display: grid;
  grid-template-columns: 274px repeat(4, 201.5px);
  background: #1f1f1f;
}

.market {
  padding: 9px 0 0 41px;
}

.market-tri {
  display: block;
  width: 0;
  height: 0;
  margin-left: 86px;
  border-left: 11px solid transparent;
  border-right: 11px solid transparent;
  border-bottom: 8px solid #8a8a8a;
}

.market-price {
  margin: 12px 0 0 29px;
  font-size: 38px;
  line-height: 44px;
  color: #dc1414;
}

.market-row {
  width: 221px;
  display: flex;
  justify-content: space-between;
  align-items: center;
  font-size: 35px;
  line-height: 52px;
}

.market-name {
  color: #8a8a8a;
  font-size: 34px;
}

.nav-item {
  display: flex;
  flex-direction: column;
  align-items: center;
  padding-top: 12px;
  font-size: 35px;
  line-height: 40px;
  color: #8a8a8a;
}

.nav-item svg {
  height: 58px;
  margin-bottom: 17px;
}

/* android nav */
.system-nav {
  height: 126px;
  background: #fafafa;
  display: grid;
  grid-template-columns: 310px 460px 310px;
  align-items: center;
  justify-items: center;
}

.system-nav svg:first-child {
  justify-self: end;
  margin-right: -20px;
}

.system-nav svg:last-child {
  justify-self: start;
  margin-left: -22px;
}
```
